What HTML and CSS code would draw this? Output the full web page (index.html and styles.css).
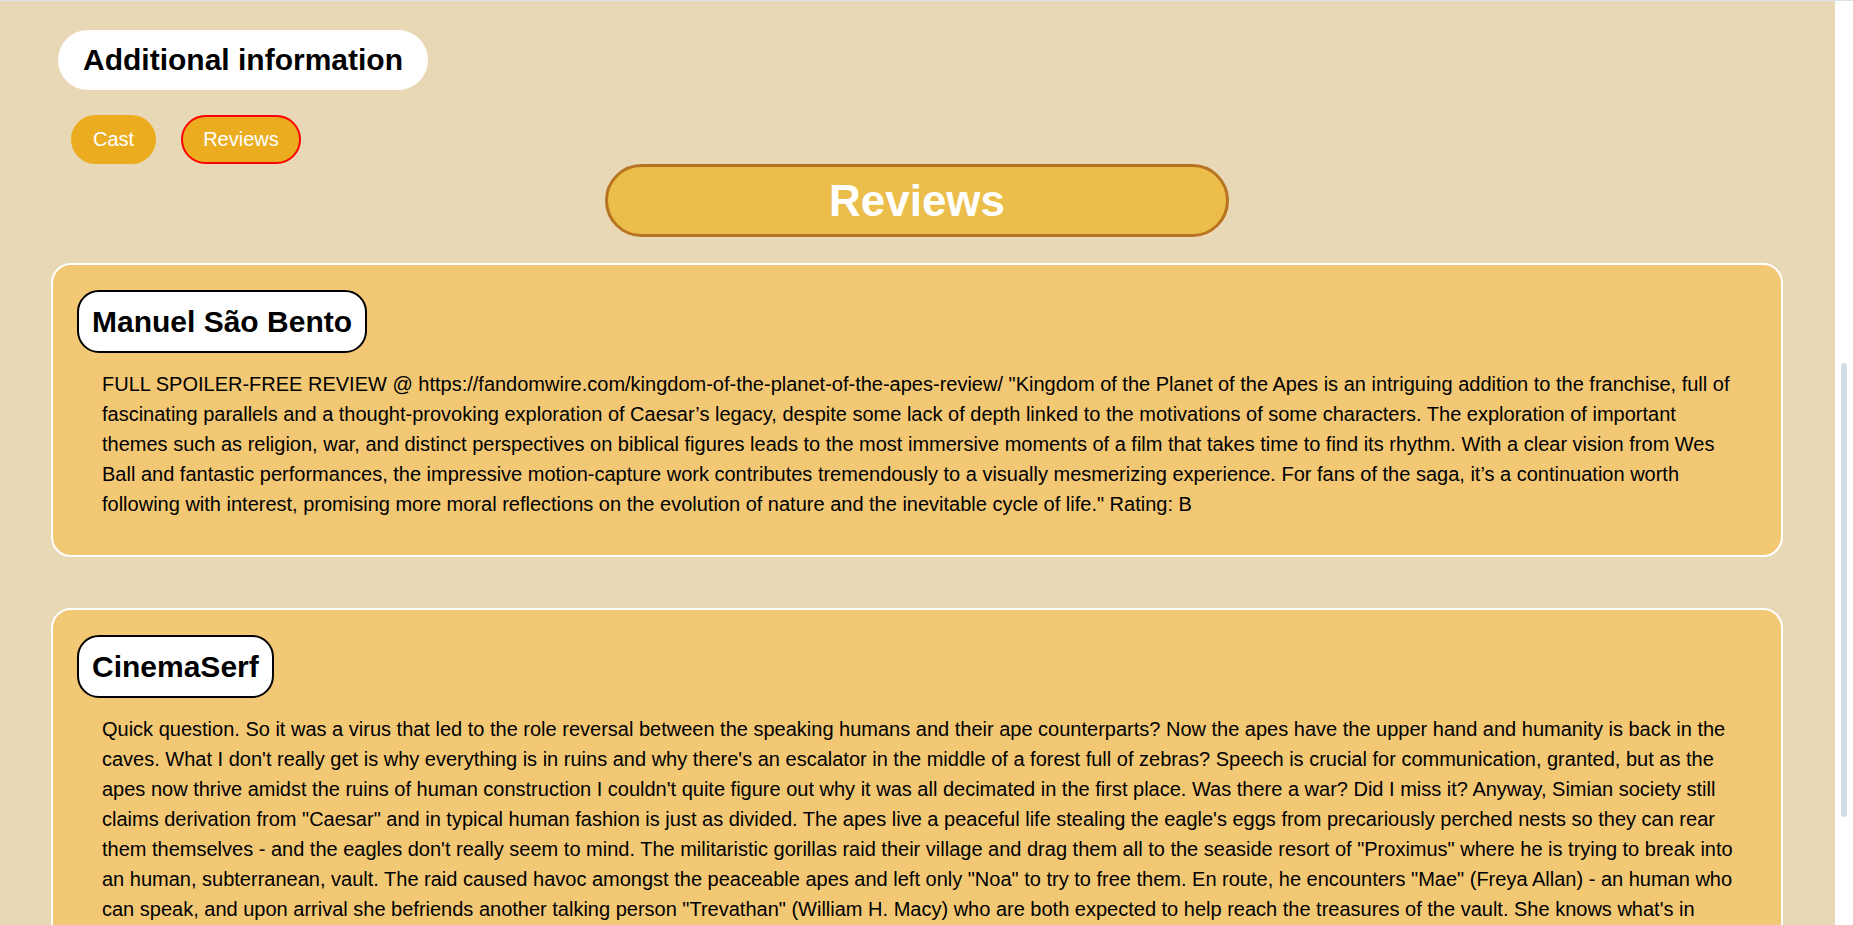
FILE: index.html
```html
<!DOCTYPE html>
<html lang="en">
<head>
<meta charset="utf-8">
<title>Reviews</title>
<link rel="stylesheet" href="styles.css">
</head>
<body>
<main class="page">
  <section class="extra">
    <h2 class="extra-title">Additional information</h2>
    <nav class="tabs">
      <a class="tab" href="#cast">Cast</a>
      <a class="tab tab-active" href="#reviews">Reviews</a>
    </nav>
  </section>

  <section class="reviews" id="reviews">
    <h2 class="reviews-title">Reviews</h2>
    <ul class="review-list">
      <li class="review">
        <h3 class="review-author">Manuel São Bento</h3>
        <p class="review-text">FULL SPOILER-FREE REVIEW @ https://fandomwire.com/kingdom-of-the-planet-of-the-apes-review/ "Kingdom of the Planet of the Apes is an intriguing addition to the franchise, full of fascinating parallels and a thought-provoking exploration of Caesar’s legacy, despite some lack of depth linked to the motivations of some characters. The exploration of important themes such as religion, war, and distinct perspectives on biblical figures leads to the most immersive moments of a film that takes time to find its rhythm. With a clear vision from Wes Ball and fantastic performances, the impressive motion-capture work contributes tremendously to a visually mesmerizing experience. For fans of the saga, it’s a continuation worth following with interest, promising more moral reflections on the evolution of nature and the inevitable cycle of life." Rating: B</p>
      </li>
      <li class="review">
        <h3 class="review-author">CinemaSerf</h3>
        <p class="review-text">Quick question. So it was a virus that led to the role reversal between the speaking humans and their ape counterparts? Now the apes have the upper hand and humanity is back in the caves. What I don't really get is why everything is in ruins and why there's an escalator in the middle of a forest full of zebras? Speech is crucial for communication, granted, but as the apes now thrive amidst the ruins of human construction I couldn't quite figure out why it was all decimated in the first place. Was there a war? Did I miss it? Anyway, Simian society still claims derivation from "Caesar" and in typical human fashion is just as divided. The apes live a peaceful life stealing the eagle's eggs from precariously perched nests so they can rear them themselves - and the eagles don't really seem to mind. The militaristic gorillas raid their village and drag them all to the seaside resort of "Proximus" where he is trying to break into an human, subterranean, vault. The raid caused havoc amongst the peaceable apes and left only "Noa" to try to free them. En route, he encounters "Mae" (Freya Allan) - an human who can speak, and upon arrival she befriends another talking person "Trevathan" (William H. Macy) who are both expected to help reach the treasures of the vault. She knows what's in there, but will she be able to use it to her advantage before "Proximus" gets his hands on it? The visual effects are impressive and the motion capture work is as convincing as ever, but at nearly two and a half hours it does drag a bit in places and the story is rather thin on substance. Still, it's an enjoyable enough adventure that sets things up nicely for another instalment.</p>
      </li>
    </ul>
  </section>
</main>
<div class="scrollbar" aria-hidden="true">
  <div class="scrollbar-thumb"></div>
</div>
</body>
</html>
```

FILE: styles.css
```css
html {
  border-top: 1px solid #d9e2ea;
  background: #e9d8b5;
}

body {
  margin: 0;
  display: flex;
  align-items: flex-start;
  background: #e9d8b5;
  font-family: "Liberation Sans", Arial, sans-serif;
  color: #000;
}

.page {
  flex: 1;
  min-width: 0;
  padding: 29px 52px 60px 51px;
}

.scrollbar {
  flex: 0 0 18px;
  height: 924px;
  background: #ffffff;
  display: flex;
  flex-direction: column;
  align-items: flex-start;
}

.scrollbar-thumb {
  width: 6px;
  height: 454px;
  margin: 362px 0 0 6px;
  border-radius: 3px;
  background: #d3dde6;
}

.extra {
  display: flex;
  flex-direction: column;
  align-items: flex-start;
}

.extra-title {
  margin: 0 0 0 7px;
  padding: 13px 25px;
  background: #ffffff;
  border-radius: 30px;
  font-size: 30px;
  line-height: 34px;
  font-weight: 700;
}

.tabs {
  display: flex;
  gap: 25px;
  margin: 25px 0 0 20px;
}

.tab {
  display: block;
  padding: 11px 20px;
  border: 2px solid transparent;
  border-radius: 25px;
  background: #ebad1f;
  color: #ffffff;
  font-size: 20px;
  line-height: 23px;
  text-decoration: none;
}

.tab-active {
  border-color: #ff0000;
}

.reviews-title {
  width: 618px;
  margin: 0 auto 26px;
  padding: 8px 0;
  border: 3px solid #b87320;
  border-radius: 40px;
  background: #ebbd4a;
  color: #ffffff;
  text-align: center;
  font-size: 44px;
  line-height: 51px;
  font-weight: 700;
}

.review-list {
  list-style: none;
  margin: 0;
  padding: 0;
  display: flex;
  flex-direction: column;
  gap: 51px;
}

.review {
  display: flex;
  flex-direction: column;
  align-items: flex-start;
  padding: 25px 24px;
  border: 2px solid #ffffff;
  border-radius: 20px;
  background: #f2c875;
}

.review-author {
  margin: 0;
  padding: 12px 13px;
  border: 2px solid #000000;
  border-radius: 22px;
  background: #ffffff;
  font-size: 30px;
  line-height: 35px;
  font-weight: 700;
}

.review-text {
  margin: 16px 20px 11px 25px;
  font-size: 20px;
  line-height: 30px;
}
```
